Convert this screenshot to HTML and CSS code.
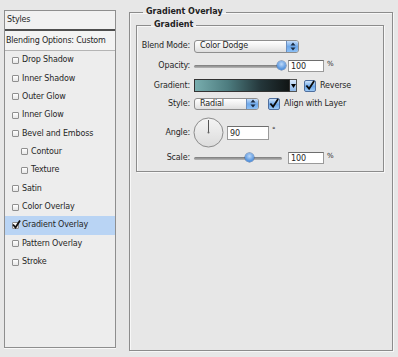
FILE: index.html
```html
<!DOCTYPE html>
<html>
<head>
<meta charset="utf-8">
<link rel="stylesheet" href="styles.css">
</head>
<body>
<div class="styles-panel">
  <div class="panel-head">Styles</div>
  <div class="panel-blend">Blending Options: Custom</div>
  <div class="item"><span class="cb"></span>Drop Shadow</div>
  <div class="item"><span class="cb"></span>Inner Shadow</div>
  <div class="item"><span class="cb"></span>Outer Glow</div>
  <div class="item"><span class="cb"></span>Inner Glow</div>
  <div class="item"><span class="cb"></span>Bevel and Emboss</div>
  <div class="item sub"><span class="cb"></span>Contour</div>
  <div class="item sub"><span class="cb"></span>Texture</div>
  <div class="item"><span class="cb"></span>Satin</div>
  <div class="item"><span class="cb"></span>Color Overlay</div>
  <div class="item selected"><span class="cb checked"><svg width="9" height="9" viewBox="0 0 9 9"><path d="M1 4.5 L3.5 7.5 L8 0.5" fill="none" stroke="#111" stroke-width="1.8"/></svg></span>Gradient Overlay</div>
  <div class="item"><span class="cb"></span>Pattern Overlay</div>
  <div class="item"><span class="cb"></span>Stroke</div>
</div>

<fieldset class="outer">
  <legend class="outer-legend">Gradient Overlay</legend>
  <fieldset class="inner">
    <legend class="inner-legend">Gradient</legend>
    <div class="row r1">
      <span class="lbl">Blend Mode:</span>
      <div class="select wide"><span class="sel-text">Color Dodge</span><span class="stepper"><svg width="6" height="9" viewBox="0 0 6 9"><path d="M3 0.5 L5.5 3.5 L0.5 3.5 Z M3 8.5 L5.5 5.5 L0.5 5.5 Z" fill="#1a2a40"/></svg></span></div>
    </div>
    <div class="row r2">
      <span class="lbl">Opacity:</span>
      <div class="slider long"><span class="track"></span><span class="thumb end"></span></div>
      <span class="num">100</span><span class="unit">%</span>
    </div>
    <div class="row r3">
      <span class="lbl">Gradient:</span>
      <div class="swatch"></div><span class="swatch-btn"><svg width="5" height="4" viewBox="0 0 5 4"><path d="M0 0 L5 0 L2.5 4 Z" fill="#000"/></svg></span>
      <span class="cb-aqua rev"><svg width="11" height="11" viewBox="0 0 11 11"><path d="M1.5 5.5 L4.5 9 L10 0.5" fill="none" stroke="#0a0a0a" stroke-width="2"/></svg></span><span class="cb-label">Reverse</span>
    </div>
    <div class="row r4">
      <span class="lbl">Style:</span>
      <div class="select narrow"><span class="sel-text">Radial</span><span class="stepper"><svg width="6" height="9" viewBox="0 0 6 9"><path d="M3 0.5 L5.5 3.5 L0.5 3.5 Z M3 8.5 L5.5 5.5 L0.5 5.5 Z" fill="#1a2a40"/></svg></span></div>
      <span class="cb-aqua align"><svg width="11" height="11" viewBox="0 0 11 11"><path d="M1.5 5.5 L4.5 9 L10 0.5" fill="none" stroke="#0a0a0a" stroke-width="2"/></svg></span><span class="cb-label">Align with Layer</span>
    </div>
    <div class="row r5">
      <span class="lbl">Angle:</span>
      <svg class="dial" width="31" height="31" viewBox="0 0 31 31">
        <defs><linearGradient id="dg" x1="0" y1="0" x2="0" y2="1"><stop offset="0" stop-color="#f4f4f4"/><stop offset="1" stop-color="#dcdcdc"/></linearGradient></defs>
        <circle cx="15.5" cy="15.5" r="14.5" fill="url(#dg)" stroke="#8c8c8c" stroke-width="1"/>
        <line x1="15.5" y1="15.5" x2="15.5" y2="3" stroke="#555" stroke-width="1"/>
        <circle cx="15.5" cy="15.5" r="1" fill="#666"/>
      </svg>
      <span class="num angle">90</span><span class="deg">°</span>
    </div>
    <div class="row r6">
      <span class="lbl">Scale:</span>
      <div class="slider long"><span class="track"></span><span class="thumb mid"></span></div>
      <span class="num">100</span><span class="unit">%</span>
    </div>
  </fieldset>
</fieldset>
</body>
</html>
```

FILE: styles.css
```css
html, body {
  margin: 0;
  padding: 0;
}
body {
  width: 398px;
  height: 357px;
  background: #e7e7e7;
  font-family: "DejaVu Sans", sans-serif;
  font-size: 8px;
  line-height: 10px;
  letter-spacing: -0.15px;
  color: #262626;
  display: flex;
  align-items: flex-start;
  overflow: hidden;
}

/* left list */
.styles-panel {
  box-sizing: border-box;
  width: 112px;
  height: 338px;
  margin: 10px 0 0 4px;
  border: 1px solid #8e8e8e;
  background: #ededed;
  box-shadow: 0 1px 0 #f8f8f8;
}
.panel-head {
  height: 18px;
  line-height: 18px;
  padding-left: 2px;
  background: #f1f1f1;
  border-bottom: 2px solid #4e4e4e;
}
.panel-blend {
  height: 19px;
  line-height: 19px;
  padding-left: 1px;
  background: #f3f3f3;
  border-bottom: 1px solid #b4b4b4;
  letter-spacing: -0.2px;
}
.item {
  height: 18.36px;
  display: flex;
  align-items: center;
  padding-left: 7px;
}
.item.sub {
  padding-left: 16px;
}
.item.selected {
  background: #b9d4f4;
}
.cb {
  box-sizing: border-box;
  width: 7px;
  height: 7px;
  margin-right: 3px;
  border: 1px solid #8f8f8f;
  border-radius: 1px;
  background: linear-gradient(#ffffff, #e6e6e6);
  position: relative;
}
.cb.checked svg {
  position: absolute;
  left: -1px;
  top: -3px;
}

/* right group boxes */
fieldset {
  margin: 0;
  min-width: 0;
}
.outer {
  box-sizing: border-box;
  width: 264px;
  height: 344px;
  margin: 7px 0 0 13px;
  padding: 3px 8px 0 6px;
  border: 1px solid #8c8c8c;
  box-shadow: inset 1px 1px 0 #f7f7f7, 1px 1px 0 #f7f7f7;
}
.outer-legend {
  margin-left: 7px;
  padding: 0 3px;
  font-weight: bold;
  letter-spacing: 0;
  color: #222;
}
.inner {
  box-sizing: border-box;
  width: 248px;
  height: 152px;
  padding: 6px 0 0 0;
  border: 1px solid #8c8c8c;
  box-shadow: inset 1px 1px 0 #f7f7f7, 1px 1px 0 #f7f7f7;
}
.inner-legend {
  margin-left: 14px;
  padding: 0 3px;
  font-weight: bold;
  letter-spacing: 0;
  color: #222;
}
.row {
  display: flex;
  align-items: center;
}
.r1 { height: 20px; }
.r2 { height: 19px; }
.r3 { height: 21px; }
.r4 { height: 15px; }
.r5 { height: 31px; margin-top: 6px; }
.r6 { height: 20px; }
.lbl {
  width: 53px;
  text-align: right;
  margin-right: 4px;
  flex: none;
}
.select {
  box-sizing: border-box;
  height: 13px;
  display: flex;
  align-items: center;
  border: 1px solid #8e8e8e;
  border-radius: 3px;
  background: linear-gradient(#ffffff, #f0f0f0 50%, #dedede);
  overflow: hidden;
}
.select.wide { width: 105px; }
.select.narrow { width: 65px; height: 12px; }
.sel-text {
  flex: 1;
  padding-left: 5px;
}
.stepper {
  width: 11px;
  align-self: stretch;
  display: flex;
  align-items: center;
  justify-content: center;
  background: linear-gradient(#c6defa, #6ea8ea 50%, #8cc0f6);
  border-left: 1px solid #6b8fc0;
}
.slider {
  position: relative;
  height: 10px;
}
.slider.long { width: 92px; }
.track {
  position: absolute;
  left: 0;
  right: 4px;
  top: 4px;
  height: 3px;
  border-radius: 2px;
  background: linear-gradient(#7a7a7a, #b8b8b8);
}
.thumb {
  position: absolute;
  top: 0;
  width: 9px;
  height: 9px;
  border-radius: 50%;
  background: radial-gradient(circle at 50% 35%, #bcd9fa, #4f8fdb 70%, #3f74c0);
  box-shadow: 0 0 0 0.5px #46699c;
}
.thumb.end { left: 83px; }
.thumb.mid { left: 51px; }
.num {
  box-sizing: border-box;
  width: 36px;
  height: 12px;
  line-height: 11px;
  padding-left: 2px;
  margin-left: 2px;
  border: 1px solid #9a9a9a;
  border-top-color: #6e6e6e;
  background: #fff;
  font-size: 8px;
}
.unit {
  margin-left: 3px;
  align-self: flex-start;
  margin-top: 3px;
  font-size: 7px;
}
.swatch {
  box-sizing: border-box;
  width: 96px;
  height: 13px;
  border: 1px solid #333;
  background: linear-gradient(90deg, #78adae, #4d7c7f 35%, #24363a 70%, #111515);
}
.swatch-btn {
  box-sizing: border-box;
  width: 7px;
  height: 13px;
  display: flex;
  align-items: center;
  justify-content: center;
  background: linear-gradient(#d8e8fb, #8db8ea);
  border: 1px solid #555;
  border-left: none;
}
.cb-aqua {
  box-sizing: border-box;
  width: 12px;
  height: 12px;
  border: 1px solid #4f6f9e;
  border-radius: 2px;
  background: linear-gradient(#cfe4fb, #6aa6ea 55%, #9cc9f6);
  display: flex;
  align-items: center;
  justify-content: center;
}
.cb-aqua.rev { margin-left: 7px; }
.cb-aqua.align { margin-left: 9px; }
.cb-label { margin-left: 4px; }
.dial {
  margin-left: -1px;
  flex: none;
}
.num.angle {
  width: 42px;
  height: 14px;
  line-height: 13px;
  margin-left: 3px;
}
.deg {
  margin-left: 3px;
  align-self: flex-start;
  margin-top: 8px;
  font-size: 7px;
}
```
